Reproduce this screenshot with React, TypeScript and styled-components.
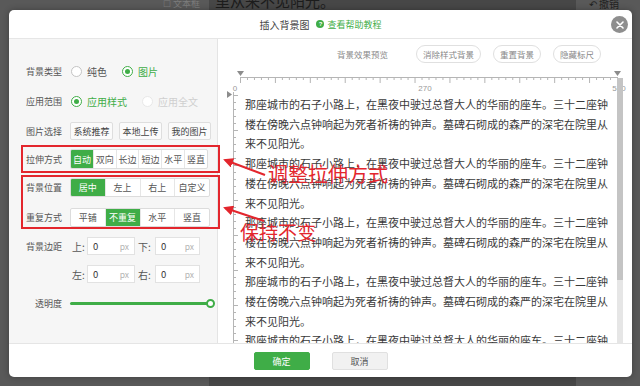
import React from "react";
import styled, { createGlobalStyle } from "styled-components";

const GREEN = "#3fad47";
const RED = "#e3262d";
const CJK = `"Noto Sans CJK SC", "Noto Sans", sans-serif`;

const GlobalStyle = createGlobalStyle`
  html, body {
    margin: 0;
    padding: 0;
    background: #575757;
  }
  body {
    font-family: ${CJK};
  }
  * {
    box-sizing: border-box;
  }
`;

const Screen = styled.div`
  position: relative;
  width: 640px;
  height: 386px;
  overflow: hidden;
  display: flex;
  background: #595959;
`;

const Gutter = styled.div<{ $w?: number }>`
  width: ${(p) => (p.$w ? `${p.$w}px` : "auto")};
  flex: ${(p) => (p.$w ? "none" : 1)};
  display: flex;
  justify-content: flex-end;
  padding-right: 9px;
`;

const GhostTool = styled.div`
  margin-top: -3px;
  font-size: 9px;
  color: #7c7c7c;
`;

const DocPage = styled.div`
  width: 367px;
  background: #474747;
  padding-left: 6px;
`;

const GhostLine = styled.div`
  margin-top: -9px;
  font-size: 15px;
  line-height: 20px;
  color: #1c1c1c;
`;

const GhostUndo = styled.div`
  margin: -4px 12px 0 0;
  font-size: 10px;
  color: #222;
`;

const Dialog = styled.div`
  position: absolute;
  left: 9px;
  top: 10px;
  width: 623px;
  height: 367px;
  background: #fff;
  border-radius: 5px;
  display: flex;
  flex-direction: column;
  box-shadow: 0 0 6px rgba(0, 0, 0, 0.3);
`;

const Header = styled.div`
  position: relative;
  height: 29px;
  flex: none;
  border-bottom: 1px solid #e6e6e6;
  display: flex;
  align-items: center;
  justify-content: center;
`;

const Title = styled.span`
  font-size: 10px;
  color: #444;
`;

const HelpLink = styled.span`
  display: flex;
  align-items: center;
  gap: 3px;
  margin-left: 7px;
  font-size: 9px;
  color: ${GREEN};
`;

const HelpIcon = styled.span`
  width: 8px;
  height: 8px;
  border-radius: 50%;
  background: ${GREEN};
  color: #fff;
  font-size: 6px;
  line-height: 8px;
  text-align: center;
  font-family: "Liberation Sans", sans-serif;
  font-weight: bold;
`;

const CloseButton = styled.div`
  position: absolute;
  right: 4px;
  top: 6px;
  width: 17px;
  height: 17px;
  border-radius: 50%;
  background: #8e8e8e;
  display: flex;
  align-items: center;
  justify-content: center;
`;

const Body = styled.div`
  flex: 1;
  min-height: 0;
  display: flex;
`;

const LeftPanel = styled.div`
  width: 209px;
  flex: none;
  background: #f6f6f6;
  border-right: 1px solid #e4e4e4;
  padding-left: 12px;
  display: flex;
  flex-direction: column;
`;

const Group = styled.div<{ $mark?: boolean; $mt: number; $gap?: number }>`
  position: relative;
  width: 199px;
  margin-top: ${(p) => p.$mt}px;
  border: 2px solid ${(p) => (p.$mark ? RED : "transparent")};
  display: flex;
  flex-direction: column;
  gap: ${(p) => p.$gap ?? 0}px;
`;

const Row = styled.div<{ $h: number }>`
  height: ${(p) => p.$h}px;
  display: flex;
  align-items: center;
`;

const Label = styled.span`
  width: 39px;
  flex: none;
  margin-right: 8px;
  text-align: right;
  font-size: 9px;
  color: #555;
  white-space: nowrap;
`;

const RadioOption = styled.span<{ $on?: boolean; $disabled?: boolean }>`
  display: flex;
  align-items: center;
  margin-right: 14px;
  font-size: 10px;
  color: ${(p) => (p.$disabled ? "#cfcfcf" : p.$on ? GREEN : "#555")};
`;

const RadioDot = styled.span<{ $on?: boolean; $disabled?: boolean }>`
  width: 11px;
  height: 11px;
  margin: 0 5px 0 1px;
  border-radius: 50%;
  background: #fff;
  border: 1px solid
    ${(p) => (p.$disabled ? "#e8e8e8" : p.$on ? GREEN : "#c4c4c4")};
  display: flex;
  align-items: center;
  justify-content: center;

  &::after {
    content: "";
    display: ${(p) => (p.$on ? "block" : "none")};
    width: 5px;
    height: 5px;
    border-radius: 50%;
    background: ${GREEN};
  }
`;

const PlainButton = styled.span`
  width: 43px;
  height: 18px;
  margin-right: 6px;
  border: 1px solid #dedede;
  border-radius: 2px;
  background: #fbfbfb;
  font-size: 9px;
  color: #444;
  display: flex;
  align-items: center;
  justify-content: center;
`;

const Segmented = styled.div<{ $w: number; $h: number }>`
  width: ${(p) => p.$w}px;
  height: ${(p) => p.$h}px;
  display: flex;
  border: 1px solid #dcdcdc;
  border-radius: 2px;
  background: #fff;
  overflow: hidden;
`;

const Segment = styled.span<{ $on?: boolean }>`
  flex: 1;
  display: flex;
  align-items: center;
  justify-content: center;
  font-size: 9px;
  color: ${(p) => (p.$on ? "#fff" : "#555")};
  background: ${(p) => (p.$on ? GREEN : "transparent")};

  & + & {
    border-left: 1px solid #e6e6e6;
  }
`;

const Field = styled.div<{ $ml?: number }>`
  display: flex;
  align-items: center;
  margin-left: ${(p) => p.$ml ?? 0}px;
`;

const SideLabel = styled.span<{ $w: number }>`
  width: ${(p) => p.$w}px;
  padding-left: 2px;
  font-size: 10px;
  color: #555;
`;

const NumberBox = styled.div<{ $w: number }>`
  width: ${(p) => p.$w}px;
  height: 18px;
  padding: 0 5px;
  background: #fff;
  border: 1px solid #e2e2e2;
  display: flex;
  align-items: center;
  justify-content: space-between;
  font-size: 9.5px;
  color: #333;

  small {
    font-size: 8.5px;
    color: #b3b3b3;
  }
`;

const SliderTrack = styled.div`
  position: relative;
  width: 140px;
  height: 3px;
  border-radius: 2px;
  background: ${GREEN};
`;

const SliderKnob = styled.span`
  position: absolute;
  right: -5px;
  top: -3px;
  width: 9px;
  height: 9px;
  border-radius: 50%;
  background: #fff;
  border: 2px solid ${GREEN};
`;

const RightPanel = styled.div`
  flex: 1;
  min-width: 0;
  display: flex;
  flex-direction: column;
`;

const Toolbar = styled.div`
  height: 31px;
  flex: none;
  display: flex;
  align-items: center;
  padding: 0 0 1px 119px;
  gap: 12px;
`;

const PreviewLabel = styled.span`
  margin-right: 16px;
  font-size: 8.5px;
  color: #8a8a8a;
`;

const Pill = styled.span`
  height: 18px;
  padding: 0 6px;
  border: 1px solid #e0e0e0;
  border-radius: 9px;
  font-size: 8.5px;
  color: #888;
  display: flex;
  align-items: center;
`;

const Editor = styled.div`
  flex: 1;
  min-height: 0;
  display: grid;
  grid-template-columns: 27px 372px 6px 1fr;
  grid-template-rows: 25px 1fr;
  overflow: hidden;
`;

const RulerLayer = styled.svg`
  grid-area: 1 / 1 / 3 / 5;
  display: block;
`;

const Content = styled.div`
  grid-area: 2 / 2 / 3 / 3;
  overflow: hidden;
  font-size: 11px;
  line-height: 19.7px;
  color: #3a3a3a;
`;

const Scrollbar = styled.div`
  position: relative;
  grid-area: 1 / 3 / 3 / 4;
  margin-top: 8px;
  background: #e6e6e6;
  display: flex;
  flex-direction: column;
`;

const ScrollThumb = styled.div`
  height: 202px;
  background: #c4c4c4;
`;

const Footer = styled.div`
  height: 34px;
  flex: none;
  border-top: 1px solid #e5e5e5;
  display: flex;
  align-items: center;
  justify-content: center;
  gap: 22px;
  padding-top: 1px;
`;

const FooterButton = styled.span<{ $primary?: boolean }>`
  width: 56px;
  height: 18px;
  border-radius: 2px;
  font-size: 9px;
  display: flex;
  align-items: center;
  justify-content: center;
  color: ${(p) => (p.$primary ? "#fff" : "#555")};
  background: ${(p) => (p.$primary ? GREEN : "#f1f1f1")};
  border: 1px solid ${(p) => (p.$primary ? GREEN : "#e0e0e0")};
`;

const AnnotationLayer = styled.div`
  position: absolute;
  inset: 0;
  pointer-events: none;

  svg {
    position: absolute;
    inset: 0;
  }
`;

const Note = styled.span<{ $x: number; $y: number; $size: number }>`
  position: absolute;
  left: ${(p) => p.$x}px;
  top: ${(p) => p.$y}px;
  font-size: ${(p) => p.$size}px;
  line-height: 1;
  color: ${RED};
  white-space: nowrap;
`;

const PARAGRAPH =
  "那座城市的石子小路上，在黑夜中驶过总督大人的华丽的座车。三十二座钟楼在傍晚六点钟响起为死者祈祷的钟声。墓碑石砌成的森严的深宅在院里从来不见阳光。";

function Ruler() {
  const hTicks = [];
  const step = 377 / 54;
  for (let i = 0; i <= 54; i++) {
    const x = 22.5 + i * step;
    hTicks.push(
      <line key={`h${i}`} x1={x} x2={x} y1={7} y2={i % 5 === 0 ? 13 : 10} />
    );
  }
  const vTicks = [];
  for (let i = 0; i < 36; i++) {
    const y = 25.5 + i * 7;
    vTicks.push(
      <line key={`v${i}`} x1={15} x2={i % 5 === 0 ? 20 : 18} y1={y} y2={y} />
    );
  }
  return (
    <RulerLayer width="414" height="273">
      <g stroke="#b5b5b5" strokeWidth="1">
        <line x1={22} x2={400} y1={7.5} y2={7.5} />
        {hTicks}
        <line x1={15.5} x2={15.5} y1={22} y2={273} />
        {vTicks}
      </g>
      <g fill="#8c8c8c">
        <polygon points="19,1 26,1 22.5,6" />
        <polygon points="396,1 403,1 399.5,6" />
        <polygon points="9,21 9,28 14,24.5" />
      </g>
      <g fill="#999" fontSize="8" fontFamily="Liberation Sans, sans-serif" textAnchor="middle">
        <text x="17" y="21">0</text>
        <text x="207" y="21">270</text>
        <text x="401" y="21">540</text>
      </g>
    </RulerLayer>
  );
}

export default function App() {
  return (
    <>
      <GlobalStyle />
      <Screen>
        <Gutter $w={209}>
          <GhostTool>☐ 文本框</GhostTool>
        </Gutter>
        <DocPage>
          <GhostLine>里从来不见阳光。</GhostLine>
        </DocPage>
        <Gutter>
          <GhostUndo>↶ 撤销</GhostUndo>
        </Gutter>

        <Dialog>
          <Header>
            <Title>插入背景图</Title>
            <HelpLink>
              <HelpIcon>?</HelpIcon>
              查看帮助教程
            </HelpLink>
            <CloseButton>
              <svg width="8" height="8" viewBox="0 0 8 8">
                <path d="M1 1 L7 7 M7 1 L1 7" stroke="#fff" strokeWidth="1.6" strokeLinecap="round" />
              </svg>
            </CloseButton>
          </Header>

          <Body>
            <LeftPanel>
              <Group $mt={20} $gap={10}>
                <Row $h={20}>
                  <Label>背景类型</Label>
                  <RadioOption>
                    <RadioDot />
                    纯色
                  </RadioOption>
                  <RadioOption $on>
                    <RadioDot $on />
                    图片
                  </RadioOption>
                </Row>
                <Row $h={20}>
                  <Label>应用范围</Label>
                  <RadioOption $on>
                    <RadioDot $on />
                    应用样式
                  </RadioOption>
                  <RadioOption $disabled>
                    <RadioDot $disabled />
                    应用全文
                  </RadioOption>
                </Row>
                <Row $h={20}>
                  <Label>图片选择</Label>
                  <PlainButton>系统推荐</PlainButton>
                  <PlainButton>本地上传</PlainButton>
                  <PlainButton>我的图片</PlainButton>
                </Row>
              </Group>

              <Group $mark $mt={2}>
                <Row $h={24}>
                  <Label>拉伸方式</Label>
                  <Segmented $w={138} $h={20}>
                    <Segment $on>自动</Segment>
                    <Segment>双向</Segment>
                    <Segment>长边</Segment>
                    <Segment>短边</Segment>
                    <Segment>水平</Segment>
                    <Segment>竖直</Segment>
                  </Segmented>
                </Row>
              </Group>

              <Group $mark $mt={2} $gap={10}>
                <Row $h={20}>
                  <Label>背景位置</Label>
                  <Segmented $w={140} $h={19}>
                    <Segment $on>居中</Segment>
                    <Segment>左上</Segment>
                    <Segment>右上</Segment>
                    <Segment>自定义</Segment>
                  </Segmented>
                </Row>
                <Row $h={20}>
                  <Label>重复方式</Label>
                  <Segmented $w={140} $h={19}>
                    <Segment>平铺</Segment>
                    <Segment $on>不重复</Segment>
                    <Segment>水平</Segment>
                    <Segment>竖直</Segment>
                  </Segmented>
                </Row>
              </Group>

              <Group $mt={6} $gap={10}>
                <Row $h={18}>
                  <Label>背景边距</Label>
                  <Field>
                    <SideLabel $w={17}>上:</SideLabel>
                    <NumberBox $w={48}>
                      0<small>px</small>
                    </NumberBox>
                  </Field>
                  <Field $ml={1}>
                    <SideLabel $w={19}>下:</SideLabel>
                    <NumberBox $w={45}>
                      0<small>px</small>
                    </NumberBox>
                  </Field>
                </Row>
                <Row $h={18}>
                  <Label />
                  <Field>
                    <SideLabel $w={17}>左:</SideLabel>
                    <NumberBox $w={48}>
                      0<small>px</small>
                    </NumberBox>
                  </Field>
                  <Field $ml={1}>
                    <SideLabel $w={19}>右:</SideLabel>
                    <NumberBox $w={45}>
                      0<small>px</small>
                    </NumberBox>
                  </Field>
                </Row>
                <Row $h={20}>
                  <Label>透明度</Label>
                  <SliderTrack>
                    <SliderKnob />
                  </SliderTrack>
                </Row>
              </Group>
            </LeftPanel>

            <RightPanel>
              <Toolbar>
                <PreviewLabel>背景效果预览</PreviewLabel>
                <Pill>消除样式背景</Pill>
                <Pill>重置背景</Pill>
                <Pill>隐藏标尺</Pill>
              </Toolbar>
              <Editor>
                <Ruler />
                <Content>
                  {[0, 1, 2, 3, 4].map((i) => (
                    <div key={i}>{PARAGRAPH}</div>
                  ))}
                </Content>
                <Scrollbar>
                  <ScrollThumb />
                </Scrollbar>
              </Editor>
            </RightPanel>
          </Body>

          <Footer>
            <FooterButton $primary>确定</FooterButton>
            <FooterButton>取消</FooterButton>
          </Footer>

          <AnnotationLayer>
            <svg width="623" height="367">
              <defs>
                <marker id="head" viewBox="0 0 10 10" refX="8" refY="5" markerWidth="5" markerHeight="5" orient="auto-start-reverse">
                  <path d="M0 0 L10 5 L0 10 z" fill={RED} />
                </marker>
              </defs>
              <g stroke={RED} strokeWidth="2" fill="none">
                <line x1="256" y1="165" x2="216" y2="150" markerEnd="url(#head)" />
                <line x1="255" y1="211" x2="216" y2="198" markerEnd="url(#head)" />
              </g>
            </svg>
            <Note $x={259} $y={154} $size={20}>调整拉伸方式</Note>
            <Note $x={231} $y={212} $size={19}>保持不变</Note>
          </AnnotationLayer>
        </Dialog>
      </Screen>
    </>
  );
}
